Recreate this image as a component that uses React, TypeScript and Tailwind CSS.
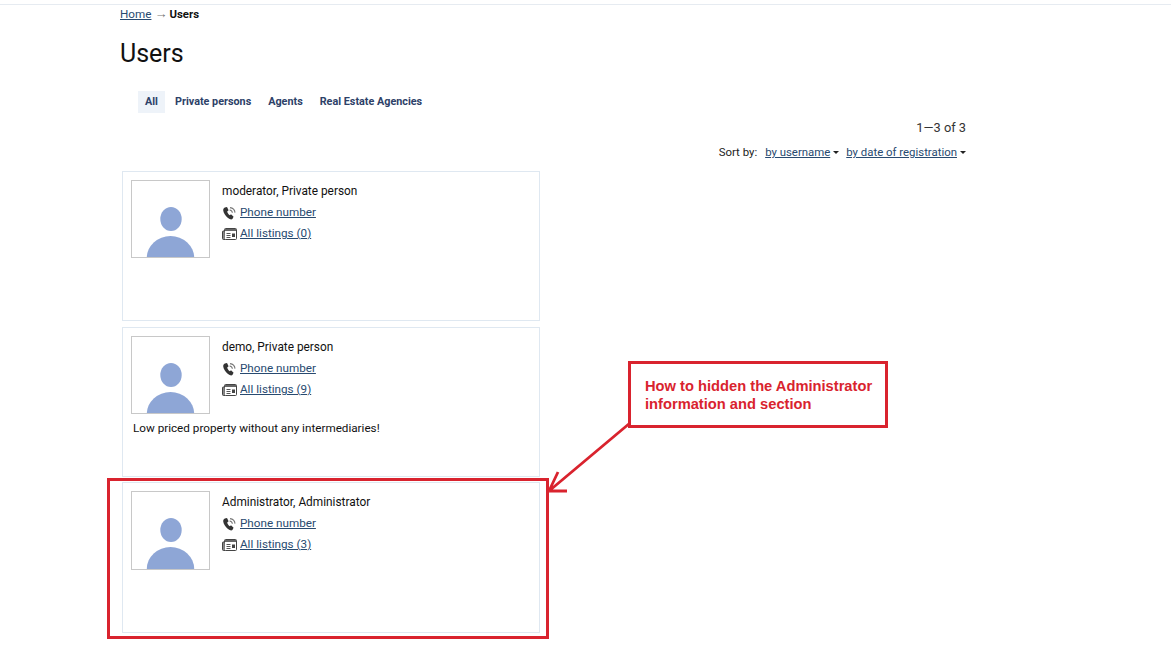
import React from 'react'

const Avatar = ({ tall }: { tall?: boolean }) => (
  <div className={tall ? 'w-[79px] h-[79px] shrink-0 border border-[#c8c8c8] bg-white overflow-hidden' : 'w-[79px] h-[78px] shrink-0 border border-[#c8c8c8] bg-white overflow-hidden'}>
    <svg width="77" height="77" viewBox="0 0 77 77">
      <ellipse cx="39" cy="38" rx="10.7" ry="12" fill="#8ea6d6" />
      <ellipse cx="38.5" cy="77" rx="23.7" ry="22" fill="#8ea6d6" />
    </svg>
  </div>
)

const PhoneIcon = () => (
  <svg width="15" height="14" viewBox="0 0 15 14" className="shrink-0">
    <path d="M2.8 1.6 L5 1 L6.6 4.2 L5.2 5.6 C5.4 7 6.4 8.4 7.8 9.2 L9 8.2 L11.6 10.8 L10.4 13 C9.4 13.8 7.8 13.4 6 12 C3.4 10 1.4 6.8 1.2 4.2 C1.2 3 1.9 2 2.8 1.6 Z" fill="#333" />
    <path d="M7.6 4 A3.2 3.2 0 0 1 10.4 6.8 M8 1.6 A5.6 5.6 0 0 1 13 6.6" stroke="#777" strokeWidth="1.1" fill="none" />
  </svg>
)

const ListingsIcon = () => (
  <svg width="15" height="12" viewBox="0 0 15 12" className="shrink-0">
    <rect x="2.5" y="0.5" width="12" height="11" rx="1" fill="#fff" stroke="#444" />
    <path d="M2.5 3 H1 A0.6 0.6 0 0 0 0.5 3.6 V10.5 A1 1 0 0 0 1.5 11.5 H3" fill="#888" stroke="#444" />
    <rect x="3" y="1" width="11" height="2" fill="#666" />
    <path d="M4.5 5.5 H8.5 M4.5 7.5 H8.5 M4.5 9.5 H8.5" stroke="#555" strokeWidth="1" />
    <rect x="10" y="5.5" width="3" height="3.5" fill="#444" />
  </svg>
)

const UserCard = ({ name, listings, about, tall }: { name: string; listings: number; about?: string; tall?: boolean }) => (
  <div className={tall ? 'h-[151px] border border-[#dfe8f1] px-2 pt-2 bg-white' : 'h-[150px] border border-[#dfe8f1] px-2 pt-2 bg-white'}>
    <div className="flex">
      <Avatar tall={tall} />
      <div className="ml-3 pt-px text-[11.7px] leading-[21px] text-[#111]">
        <div className="text-[11.85px]">{name}</div>
        <div className="flex items-center gap-[3px]">
          <PhoneIcon />
          <a className="underline text-[#284a70]">Phone number</a>
        </div>
        <div className="flex items-center gap-[3px]">
          <ListingsIcon />
          <a className="underline text-[#284a70]">All listings ({listings})</a>
        </div>
      </div>
    </div>
    {about && <p className="text-[11.7px] leading-[16px] text-[#111] mt-[6px] ml-[2px]">{about}</p>}
  </div>
)

const App: React.FC = () => {
  return (
    <div className="relative w-[1171px] h-[661px] overflow-hidden bg-white font-['Roboto',sans-serif]">
      <div className="h-[5px] border-b border-[#e6ebf1]" />

      <div className="w-[848px] ml-[120px]">
        {/* Breadcrumb */}
        <div className="flex items-center text-[11.7px] leading-[18px] text-[#222]">
          <a className="underline text-[#284a70]">Home</a>
          <span className="text-[#777] text-[13px] ml-[3px] mr-[2px]">→</span>
          <b className="font-bold text-[#111] text-[11.4px]">Users</b>
        </div>

        <h1 className="text-[25px] leading-[30px] text-[#111] mt-[16px]">Users</h1>

        {/* Tabs */}
        <div className="flex items-center mt-[22px] ml-[18px] text-[10.8px] font-bold text-[#2d4168]">
          <span className="bg-[#eef3f9] h-[22px] px-[7px] leading-[22px]">All</span>
          <span className="ml-[10px]">Private persons</span>
          <span className="ml-[17px]">Agents</span>
          <span className="ml-[17px]">Real Estate Agencies</span>
        </div>

        <div className="text-right text-[12.8px] leading-[16px] text-[#333] mt-[7px] mr-[2px]">1—3 of 3</div>

        <div className="flex justify-end items-center text-[11.4px] leading-[14px] text-[#222] mt-[9px] mr-[2px]">
          <span className="mr-[8px]">Sort by:</span>
          <a className="underline text-[#284a70]">by username</a>
          <span className="ml-[3px] mr-[7px] w-0 h-0 border-x-[3px] border-x-transparent border-t-[3px] border-t-[#222]" />
          <a className="underline text-[#284a70]">by date of registration</a>
          <span className="ml-[3px] w-0 h-0 border-x-[3px] border-x-transparent border-t-[3px] border-t-[#222]" />
        </div>

        {/* Users list */}
        <div className="w-[418px] ml-[2px] mt-[12px] flex flex-col">
          <UserCard name="moderator, Private person" listings={0} />
          <div className="mt-[6px]">
            <UserCard name="demo, Private person" listings={9} about="Low priced property without any intermediaries!" />
          </div>
          <div className="mt-[5px]">
            <UserCard name="Administrator, Administrator" listings={3} tall />
          </div>
        </div>
      </div>

      {/* Red annotation drawn over the page */}
      <div className="absolute left-[107px] top-[478px] w-[442px] h-[161px] border-[3px] border-[#d9232e]" />
      <div className="absolute left-[628px] top-[361px] w-[260px] h-[67px] border-[3px] border-[#d9232e] pl-[14px] pt-[13px] text-[14.7px] leading-[18px] font-bold text-[#d9232e] font-['Liberation_Sans',sans-serif]">
        How to hidden the Administrator information and section
      </div>
      <svg className="absolute left-[540px] top-[415px]" width="100" height="85" viewBox="0 0 100 85">
        <path d="M90 8 L9 76 M9 76 L18 57 M9 76 H27" stroke="#d9232e" strokeWidth="2.8" fill="none" />
      </svg>
    </div>
  )
}

export default App
